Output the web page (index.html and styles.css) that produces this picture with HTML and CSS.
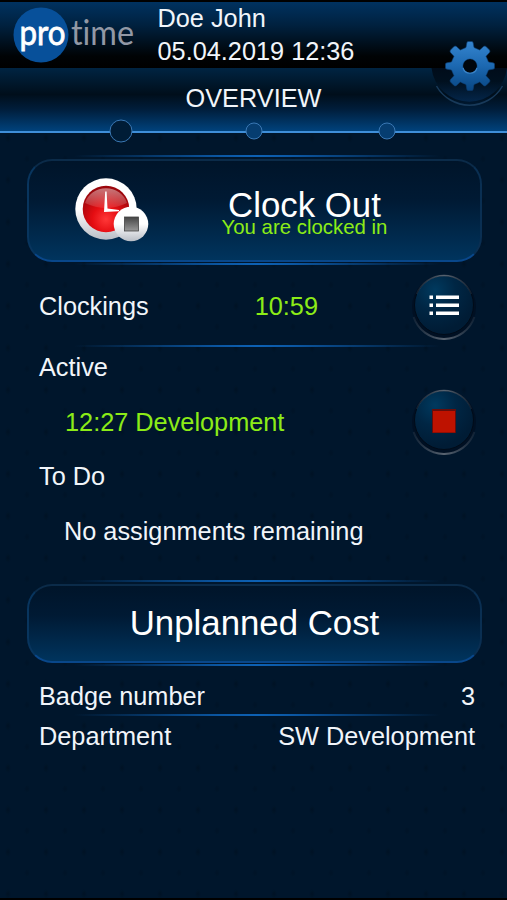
FILE: index.html
```
<!DOCTYPE html>
<html>
<head lang="en">
    <meta charset="UTF-8">
    <title>Protime - Overview</title>
    <link rel="stylesheet" href="styles.css">
</head>
<body>
<div class="header">
    <svg class="logo" width="140" height="66" viewBox="0 0 140 66">
        <circle cx="31" cy="33" r="27.5"/>
        <text class="logoPro" x="9.5" y="43" textLength="46" lengthAdjust="spacingAndGlyphs">pro</text>
        <text class="logoTime" x="61" y="43" textLength="63" lengthAdjust="spacingAndGlyphs">time</text>
    </svg>
    <div class="user">
        <div>Doe John</div>
        <div>05.04.2019 12:36</div>
    </div>
    <svg class="settings" width="76" height="78" viewBox="0 0 76 78">
        <defs>
            <linearGradient id="gearFill" x1="0" y1="0" x2="0" y2="1">
                <stop offset="0" stop-color="#3585cf"/>
                <stop offset="0.5" stop-color="#1c68b1"/>
                <stop offset="1" stop-color="#084682"/>
            </linearGradient>
            <linearGradient id="settingsFill" x1="0" y1="0" x2="0" y2="1">
                <stop offset="0" stop-color="#000c1a"/>
                <stop offset="0.4" stop-color="#00101f"/>
                <stop offset="1" stop-color="#04264a"/>
            </linearGradient>
        </defs>
        <path d="M0.500 38A38 38 0 0 0 76 38Z" fill="url(#settingsFill)"/>
        <path d="M5.500 56A38 38 0 0 0 71.500 56" fill="none" stroke="#183a5a" stroke-width="1.500"/>
        <g transform="translate(39 36)">
            <path id="gear" fill="url(#gearFill)" fill-rule="evenodd" stroke="#0b3d70" stroke-width="0.600" stroke-linejoin="round" d="M-2-24.500H2Q3-24.500 3.200-23L4-18.500Q6.500-17.500 9.700-16L13.500-19.500Q15-20.500 16-19.500L19.500-16Q20.500-15 19.500-13.500L16-9.700Q17.500-6.500 18.500-4L23-3.200Q24.500-3 24.500-2V2Q24.500 3 23 3.200L18.500 4Q17.500 6.500 16 9.700L19.500 13.500Q20.500 15 19.500 16L16 19.500Q15 20.500 13.500 19.500L9.700 16Q6.500 17.500 4 18.500L3.200 23Q3 24.500 2 24.500H-2Q-3 24.500-3.200 23L-4 18.500Q-6.500 17.500-9.700 16L-13.500 19.500Q-15 20.500-16 19.500L-19.500 16Q-20.500 15-19.500 13.500L-16 9.700Q-17.500 6.500-18.500 4L-23 3.200Q-24.500 3-24.500 2V-2Q-24.500-3-23-3.200L-18.500-4Q-17.500-6.500-16-9.700L-19.500-13.500Q-20.500-15-19.500-16L-16-19.500Q-15-20.500-13.500-19.500L-9.700-16Q-6.500-17.500-4-18.500L-3.200-23Q-3-24.500-2-24.500ZM0-7A7 7 0 1 0 0 7A7 7 0 1 0 0-7Z"/>
            <circle r="6.500" fill="#00060d"/>
            <path d="M-7 2A7.300 7.300 0 0 0 7 2" fill="none" stroke="#3a84c8" stroke-width="1.200"/>
        </g>
    </svg>
</div>
<div class="nav">
    OVERVIEW
    <div class="dots">
        <span class="dot selectedDot"></span>
        <span class="dot"></span>
        <span class="dot"></span>
    </div>
</div>
<div class="main">
    <div class="glow"></div>
    <div class="bigButton clockOut">
        <svg class="clock" width="76" height="66" viewBox="0 0 76 66">
            <defs>
                <linearGradient id="rim" x1="0" y1="0" x2="0" y2="1">
                    <stop offset="0.500" stop-color="#ffffff"/>
                    <stop offset="1" stop-color="#b9bec6"/>
                </linearGradient>
                <radialGradient id="face" cx="0.500" cy="0.720" r="0.650">
                    <stop offset="0" stop-color="#ff3838"/>
                    <stop offset="0.450" stop-color="#e50d12"/>
                    <stop offset="1" stop-color="#9c060c"/>
                </radialGradient>
                <linearGradient id="shine" x1="0" y1="0" x2="0" y2="1">
                    <stop offset="0" stop-color="#fff" stop-opacity="0.450"/>
                    <stop offset="1" stop-color="#fff" stop-opacity="0.100"/>
                </linearGradient>
                <linearGradient id="stopFill" x1="0" y1="0" x2="0" y2="1">
                    <stop offset="0" stop-color="#444"/>
                    <stop offset="1" stop-color="#999"/>
                </linearGradient>
            </defs>
            <circle cx="32" cy="33" r="30.700" fill="url(#rim)"/>
            <circle cx="32" cy="33" r="23.300" fill="url(#face)"/>
            <path d="M11 27A22 21 0 0 1 53 27Q32 37 11 27Z" fill="url(#shine)"/>
            <path d="M31.200 15.500H32.600L33.500 32.500 45 34V35.200L30 36Z" fill="#fff"/>
            <circle cx="57" cy="48" r="17.300" fill="url(#rim)"/>
            <rect x="50.500" y="41" width="14" height="14" fill="url(#stopFill)" stroke="#444" stroke-width="0.800"/>
        </svg>
        <div class="clockText">
            <div class="title">Clock Out</div>
            <div class="status">You are clocked in</div>
        </div>
    </div>
    <div class="glow"></div>

    <div class="row clockings">
        <span class="label">Clockings</span>
        <span class="green time">10:59</span>
        <span class="roundButton">
            <svg width="66" height="66" viewBox="0 0 66 66">
                <circle class="well" cx="33" cy="33" r="32"/>
                <path class="ring" d="M2.600 43A32 32 0 0 0 63.400 43"/>
                <circle class="disc" cx="33" cy="31" r="29.500"/>
                <path class="topEdge" d="M5.600 20A29.500 29.500 0 0 1 60.400 20"/>
                <path fill="#fff" d="M18.500 21.500h3.500v3.500h-3.500zM25 21.500h23v3.500h-23zM18.500 29.500h3.500v3.500h-3.500zM25 29.500h23v3.500h-23zM18.500 37.500h3.500v3.500h-3.500zM25 37.500h23v3.500h-23z"/>
            </svg>
        </span>
    </div>
    <div class="glow"></div>

    <div class="heading active">Active</div>
    <div class="row activity">
        <span class="green">12:27 Development</span>
        <span class="roundButton">
            <svg width="66" height="66" viewBox="0 0 66 66">
                <defs>
                    <radialGradient id="discFill" cx="0.350" cy="0.250" r="0.700">
                        <stop offset="0" stop-color="#003a5f"/>
                        <stop offset="0.500" stop-color="#002644"/>
                        <stop offset="1" stop-color="#001c35"/>
                    </radialGradient>
                    <linearGradient id="ringStroke" x1="0" y1="0" x2="1" y2="0">
                        <stop offset="0" stop-color="#586370" stop-opacity="0.2"/>
                        <stop offset="0.500" stop-color="#586370"/>
                        <stop offset="1" stop-color="#586370" stop-opacity="0.2"/>
                    </linearGradient>
                </defs>
                <circle class="well" cx="33" cy="33" r="32"/>
                <path class="ring" d="M2.600 43A32 32 0 0 0 63.400 43"/>
                <circle class="disc" cx="33" cy="31" r="29.500"/>
                <path class="topEdge" d="M5.600 20A29.500 29.500 0 0 1 60.400 20"/>
                <path fill="#650d0b" d="M21 20h24v24h-24z"/>
                <path fill="#be1200" d="M22 22h22v21.500h-22z"/>
            </svg>
        </span>
    </div>
    <div class="heading todo">To Do</div>
    <div class="empty">No assignments remaining</div>

    <div class="glow"></div>
    <div class="bigButton cost">Unplanned Cost</div>
    <div class="glow"></div>

    <div class="row info">
        <span>Badge number</span>
        <span>3</span>
    </div>
    <div class="glow"></div>
    <div class="row info">
        <span>Department</span>
        <span>SW Development</span>
    </div>
</div>
</body>
</html>
```
FILE: styles.css
```
*{
    margin: 0;
    padding: 0;
    box-sizing: border-box;
}
body{
    height: 900px;
    overflow: hidden;
    border-top: 2px solid #000;
    border-bottom: 2px solid #000;
    background-color: #00162c;
    background-image: radial-gradient(ellipse 3px 5px at 8px 12px, #001224, transparent),
                      radial-gradient(ellipse 3px 4px at 27px 33px, #001327, transparent);
    background-size: 38px 42px;
    font-family: "Liberation Sans", Arial, sans-serif;
    font-size: 25.3px;
    color: #f1f5fa;
    white-space: nowrap;
}
.header{
    position: relative;
    display: flex;
    height: 66px;
    background: linear-gradient(#003260, #00213f 35%, #000305 82%, #000);
}
.logo{
    margin-left: 10px;
    fill: #07509a;
    font-family: Lato, sans-serif;
    font-size: 35px;
    font-variant-ligatures: none;
}
.logoPro{
    fill: #fff;
    stroke: #fff;
    stroke-width: 0.8;
}
.logoTime{
    fill: #9298a5;
}
.user{
    margin-left: 7.5px;
    line-height: 33px;
}
.settings{
    position: absolute;
    right: 0;
    top: 28px;
    z-index: 2;
}
.nav{
    position: relative;
    height: 65px;
    line-height: 61px;
    text-align: center;
    border-bottom: 2px solid #3f8ed8;
    background: linear-gradient(#002442, #000e1b 42%, #001d3a 65%, #00427c);
}
.dots{
    position: absolute;
    left: 54px;
    top: 52px;
    display: flex;
    width: 400px;
    height: 21px;
}
.dot{
    position: relative;
    flex: 1;
}
.dot:before{
    content: "";
    position: absolute;
    left: 50%;
    top: 50%;
    width: 15px;
    height: 15px;
    border: 1.5px solid #3a78b4;
    border-radius: 50%;
    background: #063d70;
    transform: translate(-50%, -50%);
}
.selectedDot:before{
    width: 21px;
    height: 21px;
    background: #001c36;
}
.main{
    padding: 22px 25px 0 27px;
}
.glow{
    height: 2px;
    margin: 0 42px 0 47px;
    background: linear-gradient(90deg, transparent, #0b57a3 40%, #0d61b4 50%, #0b57a3 60%, transparent);
}
.bigButton{
    display: flex;
    border: 2px solid #0b2b49;
    border-left-color: #08355e;
    border-right-color: #0a2f52;
    border-bottom-color: #09478a;
    border-radius: 25px;
    background: linear-gradient(#001429, #001a34 40%, #00355f);
    background-origin: border-box;
    font-size: 34.8px;
    color: #fff;
}
.clockOut{
    height: 103px;
    margin: 2px 0 1px;
}
.clock{
    margin: 15px 0 0 45px;
}
.clockText{
    flex: 1;
    padding-right: 21px;
    text-align: center;
}
.title{
    margin-top: 24px;
    line-height: 40px;
}
.status{
    margin-top: -10px;
    line-height: 24px;
    font-size: 20.4px;
    color: #8cec17;
}
.row{
    display: flex;
    justify-content: space-between;
}
.green{
    color: #8cec17;
}
.clockings{
    height: 80px;
    padding: 9px 5px 0 12px;
    line-height: 64px;
}
.time{
    margin-left: 13px;
}
.roundButton{
    height: 66px;
    line-height: 0;
}
.well{
    fill: #001023;
}
.ring{
    fill: none;
    stroke: url(#ringStroke);
    stroke-width: 2;
}
.disc{
    fill: url(#discFill);
    stroke: #000b18;
    stroke-width: 1;
}
.topEdge{
    fill: none;
    stroke: url(#ringStroke);
    stroke-width: 1.5;
}
.heading{
    padding-left: 12px;
    line-height: 32px;
}
.active{
    margin-top: 4px;
}
.activity{
    height: 66px;
    margin-top: 6px;
    padding: 0 5px 0 38px;
    line-height: 66px;
}
.todo{
    margin-top: 5px;
}
.empty{
    margin: 23px 0 33px;
    padding-left: 37px;
    line-height: 32px;
}
.cost{
    justify-content: center;
    height: 79px;
    margin: 2px 0 1px;
    line-height: 73px;
}
.info{
    height: 48px;
    padding: 14px 7px 0 12px;
    line-height: 32px;
}
.glow + .info:last-child{
    padding-top: 4px;
}
```
